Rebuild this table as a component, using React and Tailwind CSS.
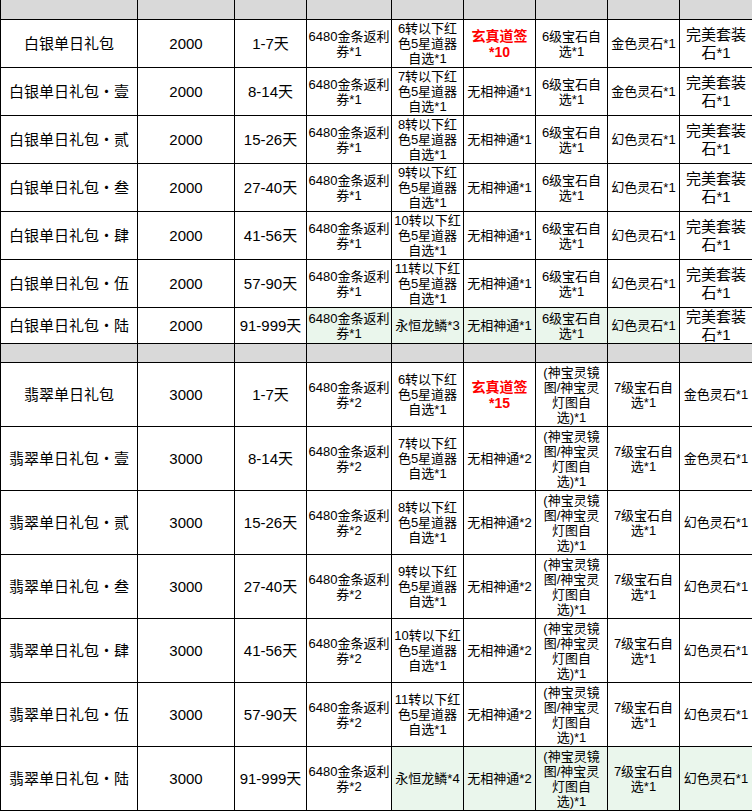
import React from "react";

const GREEN = "g";
const WHITE = "w";

function Cell({ lines, tone = WHITE, big = false, red = false }) {
  const bg =
    tone === GREEN ? "bg-[#eaf6ec]" : tone === "h" ? "bg-[#d9d9d9]" : "bg-white";
  const txt = big
    ? "text-[15px] leading-[18px]"
    : red
    ? "text-[14px] leading-[16px] font-bold text-[#ff0000]"
    : "text-[13px] leading-[15px]";
  return (
    <div className={`${bg} ${txt} flex items-center justify-center text-center text-black overflow-hidden whitespace-nowrap`}>
      <div className={red ? "text-[#ff0000]" : ""}>
        {lines.map((l, i) => (
          <React.Fragment key={i}>
            {i > 0 && <br />}
            {l}
          </React.Fragment>
        ))}
      </div>
    </div>
  );
}

const suffix = ["", "・壹", "・贰", "・叁", "・肆", "・伍", "・陆"];
const days = ["1-7天", "8-14天", "15-26天", "27-40天", "41-56天", "57-90天", "91-999天"];

function silverRow(i) {
  const last = i === 6;
  const stone = i < 2 ? "金色灵石*1" : "幻色灵石*1";
  return [
    { lines: ["白银单日礼包" + suffix[i]], big: true },
    { lines: ["2000"], big: true },
    { lines: [days[i]], big: true },
    { lines: ["6480金条返利", "券*1"], tone: last ? GREEN : WHITE },
    last
      ? { lines: ["永恒龙鳞*3"], tone: GREEN }
      : { lines: [`${i + 6}转以下红`, "色5星道器", "自选*1"] },
    i === 0
      ? { lines: ["玄真道签", "*10"], red: true }
      : { lines: ["无相神通*1"], tone: last ? GREEN : WHITE },
    { lines: ["6级宝石自", "选*1"], tone: last ? GREEN : WHITE },
    { lines: [stone], tone: last ? GREEN : WHITE },
    { lines: ["完美套装", "石*1"], big: true },
  ];
}

function jadeRow(i) {
  const last = i === 6;
  const stone = i < 2 ? "金色灵石*1" : "幻色灵石*1";
  return [
    { lines: ["翡翠单日礼包" + suffix[i]], big: true },
    { lines: ["3000"], big: true },
    { lines: [days[i]], big: true },
    { lines: ["6480金条返利", "券*2"] },
    last
      ? { lines: ["永恒龙鳞*4"], tone: GREEN }
      : { lines: [`${i + 6}转以下红`, "色5星道器", "自选*1"] },
    i === 0
      ? { lines: ["玄真道签", "*15"], red: true }
      : { lines: ["无相神通*2"], tone: last ? GREEN : WHITE },
    { lines: ["(神宝灵镜", "图/神宝灵", "灯图自", "选)*1"], tone: last ? GREEN : WHITE },
    { lines: ["7级宝石自", "选*1"], tone: last ? GREEN : WHITE },
    { lines: [stone], tone: last ? GREEN : WHITE },
  ];
}

const headerRow = Array.from({ length: 9 }, () => ({ lines: [""], tone: "h" }));

export default function App() {
  const rows = [
    headerRow,
    ...Array.from({ length: 7 }, (_, i) => silverRow(i)),
    headerRow,
    ...Array.from({ length: 7 }, (_, i) => jadeRow(i)),
  ];
  return (
    <div className="w-[752px] h-[811px] overflow-hidden bg-white">
      <div className="grid w-[752px] grid-cols-[136px_96px_71px_84px_71px_71px_71px_71px_72px] grid-rows-[19px_repeat(6,47px)_35px_18px_repeat(7,63px)] gap-px bg-black pl-px pb-px font-['Liberation_Sans','Noto_Sans_CJK_SC',sans-serif]">
        {rows.map((r, ri) =>
          r.map((c, ci) => <Cell key={`${ri}-${ci}`} {...c} />)
        )}
      </div>
    </div>
  );
}
